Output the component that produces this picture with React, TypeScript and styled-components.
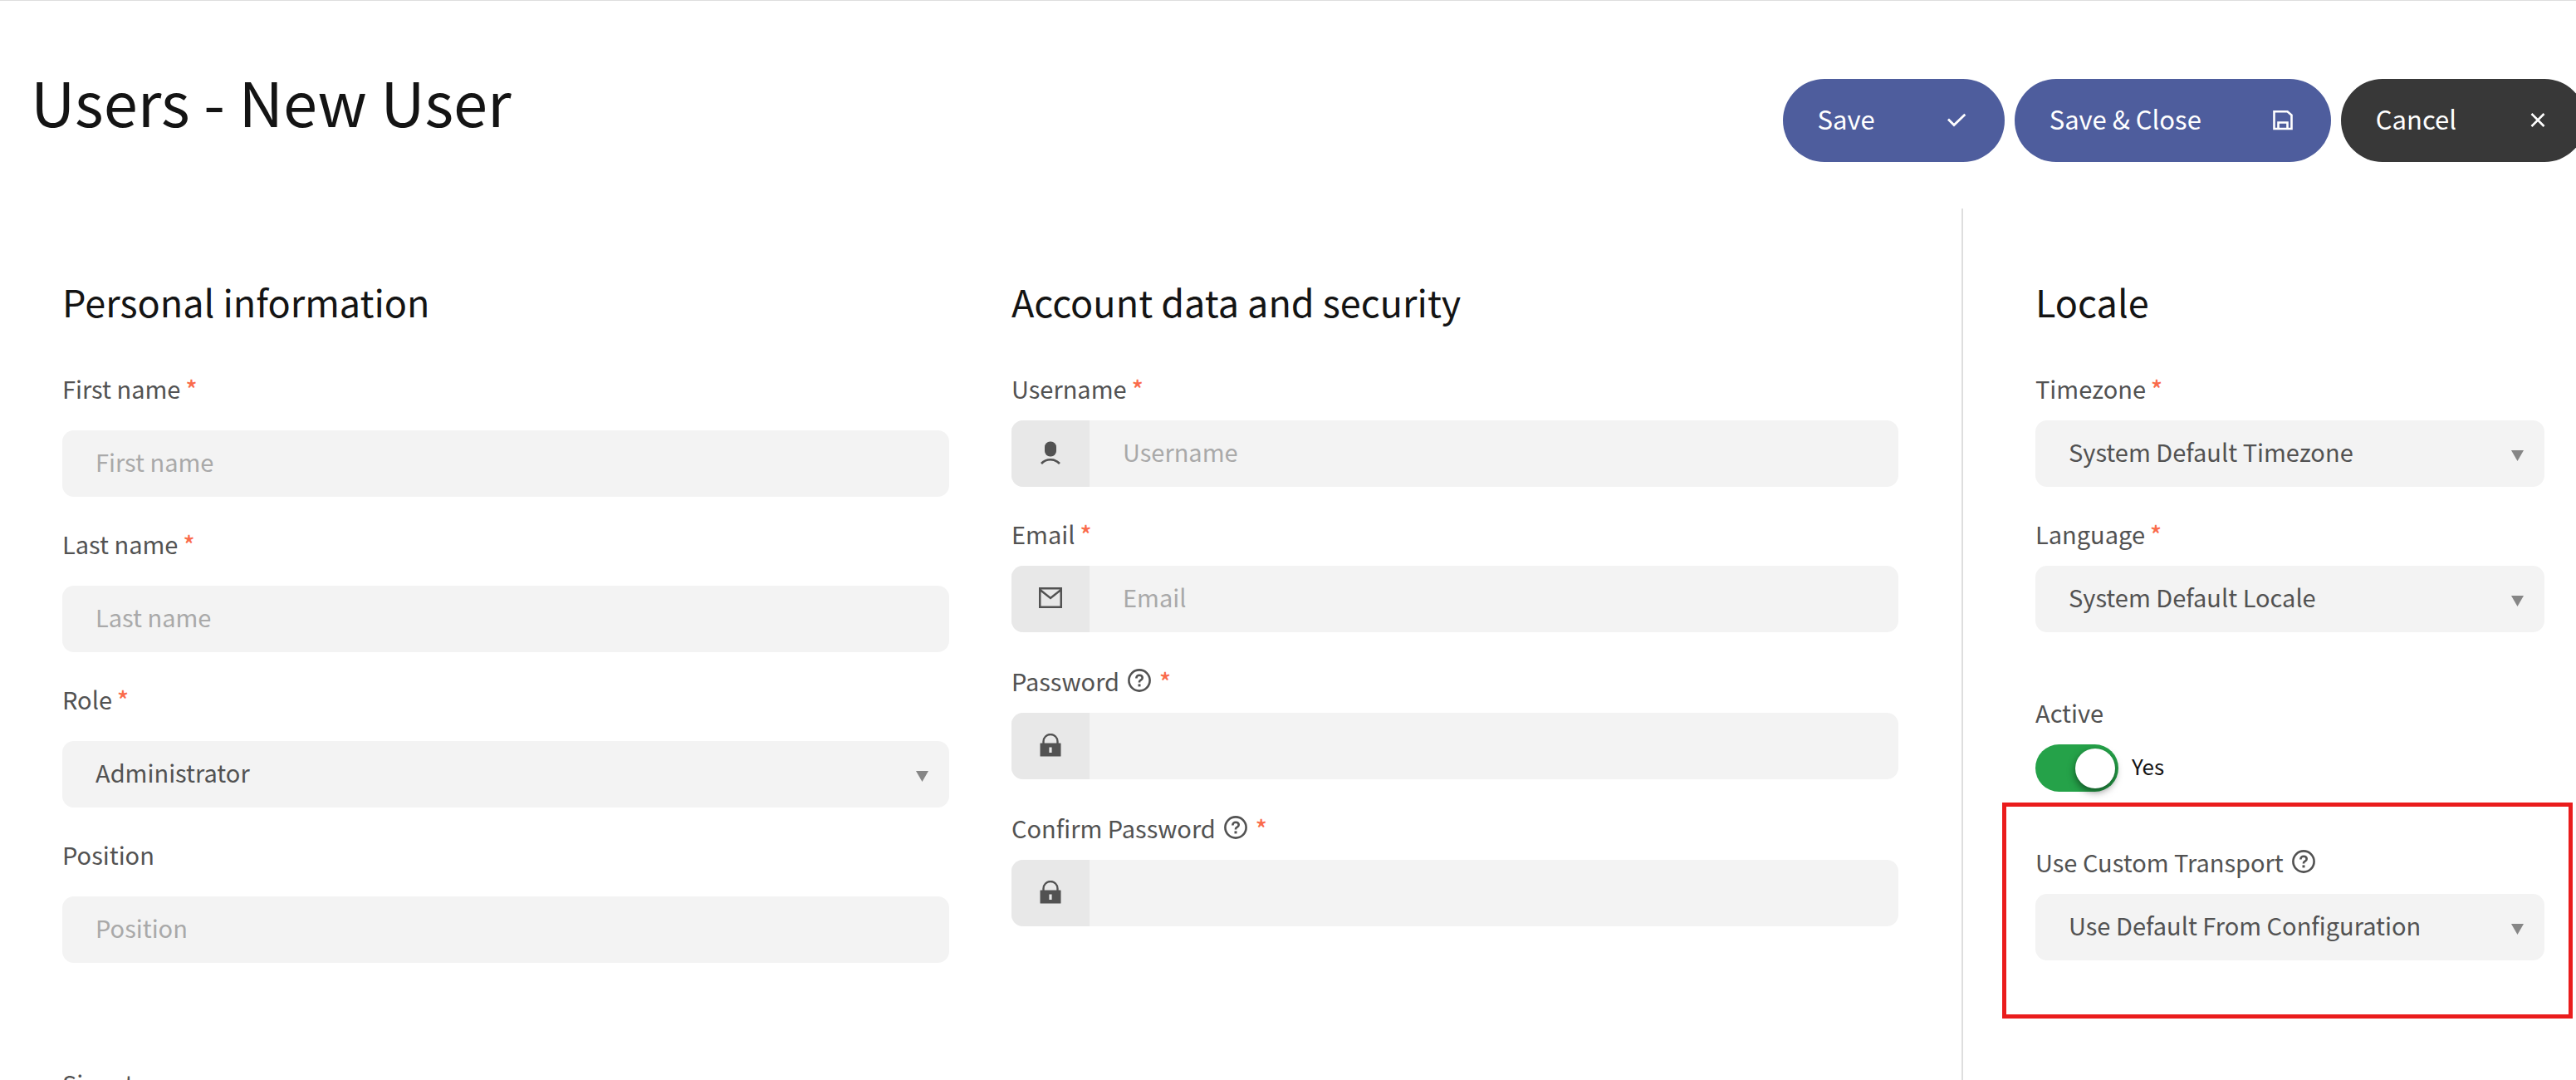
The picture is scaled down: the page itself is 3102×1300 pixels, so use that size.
import React from 'react';
import styled, { createGlobalStyle } from 'styled-components';

const fontStack = '"Source Sans Pro", "Noto Sans CJK SC", sans-serif';

const Global = createGlobalStyle`
  *, *::before, *::after { box-sizing: border-box; }
  body {
    margin: 0;
    background: #fff;
    color: #141414;
    font-family: ${fontStack};
    font-size: 29px;
    line-height: 40px;
  }
`;

const Page = styled.main`
  height: 100vh;
  overflow: hidden auto;
  scrollbar-width: none;
  border-top: 1px solid #dedede;
`;

const Header = styled.header`
  display: flex;
  justify-content: space-between;
  align-items: flex-start;
  padding: 66px 0 0 37px;
`;

const Title = styled.h1`
  margin: 0;
  font-size: 74px;
  line-height: 108px;
  font-weight: 400;
`;

const Actions = styled.div`
  display: flex;
  gap: 12px;
  margin: 28px -12px 0 0;
`;

const Action = styled.button<{ $dark?: boolean }>`
  display: flex;
  align-items: center;
  gap: 82px;
  height: 100px;
  padding: 0 42px;
  border: 0;
  border-radius: 50px;
  background: ${p => (p.$dark ? '#383838' : '#4e5d9d')};
  color: #fff;
  font: 400 31px/40px ${fontStack};
  white-space: nowrap;
  svg { display: block; flex: none; }
`;

const Caption = styled.span`
  padding-bottom: 5px;
`;

const Columns = styled.div`
  display: grid;
  grid-template-columns: minmax(0, 1fr) 740px;
  margin-top: 56px;
`;

const MainArea = styled.div`
  display: grid;
  grid-template-columns: repeat(2, minmax(0, 1fr));
  gap: 75px;
  padding: 84px 76px 0 75px;
  align-content: start;
`;

const Aside = styled.aside`
  border-left: 2px solid #dedede;
  padding: 84px 38px 0 87px;
`;

const Section = styled.section`
  display: flex;
  flex-direction: column;
`;

const SectionTitle = styled.h2`
  margin: 0 0 56px;
  font-size: 45px;
  line-height: 56px;
  font-weight: 400;
`;

const Field = styled.div<{ $roomy?: boolean; $after?: number }>`
  display: flex;
  flex-direction: column;
  gap: ${p => (p.$roomy ? 31 : 19)}px;
  margin-bottom: ${p => p.$after ?? 36}px;
`;

const Label = styled.label<{ $help?: boolean }>`
  display: flex;
  align-items: center;
  gap: 6px;
  padding-top: ${p => (p.$help ? 2 : 0)}px;
  color: #525252;
  svg { display: block; margin: 0 4px; }
`;

const Star = styled.span`
  color: #fa6b4b;
  font-weight: 500;
`;

const Control = styled.div<{ $tall?: boolean }>`
  display: flex;
  height: ${p => (p.$tall ? 240 : 80)}px;
  border-radius: 14px;
  background: #f3f3f3;
  overflow: hidden;
  position: relative;
`;

const Addon = styled.span`
  display: flex;
  align-items: center;
  justify-content: center;
  width: 94px;
  padding-bottom: 3px;
  background: #e8e8e8;
  color: #525252;
`;

const Input = styled.input`
  flex: 1;
  min-width: 0;
  border: 0;
  outline: 0;
  background: transparent;
  padding: 0 40px 6px;
  font: inherit;
  color: #525252;
  &::placeholder { color: #a9a9a9; opacity: 1; }
`;

const Area = styled.textarea`
  flex: 1;
  min-width: 0;
  border: 0;
  outline: 0;
  resize: none;
  background: transparent;
  padding: 20px 40px;
  font: inherit;
  color: #525252;
`;

const Select = styled.select`
  flex: 1;
  min-width: 0;
  appearance: none;
  border: 0;
  outline: 0;
  background: transparent;
  padding: 0 72px 6px 40px;
  font: inherit;
  color: #525252;
`;

const Caret = styled.svg`
  position: absolute;
  right: 25px;
  top: 36px;
  pointer-events: none;
`;

const Switch = styled.label`
  display: flex;
  align-items: center;
  gap: 16px;
  width: max-content;
  font-size: 26px;
  color: #141414;
`;

const Toggle = styled.input`
  appearance: none;
  display: flex;
  align-items: center;
  width: 100px;
  height: 57px;
  margin: 0;
  padding: 0 4px;
  border-radius: 29px;
  background: #a9a9a9;
  &:checked {
    justify-content: flex-end;
    background: #25a249;
  }
  &::before {
    content: "";
    width: 48px;
    height: 48px;
    border-radius: 50%;
    background: #fff;
    box-shadow: 0 4px 10px rgba(0, 0, 0, 0.5);
  }
`;

const Highlight = styled.div`
  margin: 13px -34px 0 -40px;
  padding: 44px 29px 65px 35px;
  border: 5px solid #ea1c1c;
`;

const HelpIcon = () => (
  <svg width="28" height="28" viewBox="0 0 28 28" fill="none" stroke="currentColor">
    <circle cx="14" cy="14" r="12.6" strokeWidth="2.6" />
    <path d="M10.4 11.4V11c0-1.9 1.5-3.2 3.6-3.2s3.7 1.2 3.7 3.2c0 2.8-3.7 2.3-3.7 4.8v.8" strokeWidth="2.6" />
    <path d="M14 18.4v3" strokeWidth="3" />
  </svg>
);

const UserIcon = () => (
  <svg width="24" height="28" viewBox="0 0 24 28">
    <rect x="5" y="0.5" width="14" height="18" rx="6.5" fill="currentColor" />
    <path d="M1 27Q5.500 22.300 12 22.300T23 27" fill="none" stroke="currentColor" strokeWidth="2.6" />
  </svg>
);

const MailIcon = () => (
  <svg width="28" height="25" viewBox="0 0 28 25" fill="none" stroke="currentColor" strokeWidth="2.5">
    <path d="M1.250 1.250h25.500v22.500H1.250zM1.500 3L14 13 26.500 3" />
  </svg>
);

const LockIcon = () => (
  <svg width="26" height="28" viewBox="0 0 26 28">
    <path d="M4.500 12v-2.500a8.500 8.500 0 0 1 17 0V12" fill="none" stroke="currentColor" strokeWidth="2.4" />
    <path fillRule="evenodd" d="M1 11.500h24q.5 0 .5.500v15q0 .5-.5.500H1q-.5 0-.5-.500V12q0-.5.5-.500zM11.400 16.500V23h3.200v-6.500z" fill="currentColor" />
  </svg>
);

const CheckIcon = () => (
  <svg width="32" height="32" viewBox="0 0 32 32" fill="none" stroke="currentColor" strokeWidth="2.8">
    <path d="M6 14.500L13 21.500 26.300 8.700" />
  </svg>
);

const SaveIcon = () => (
  <svg width="32" height="32" viewBox="0 0 32 32" fill="none" stroke="currentColor" strokeWidth="2.6">
    <path d="M5.500 5.300H21.500L26.500 9.500V26H5.500zM10.500 25.500V18.500h11V25.500" />
  </svg>
);

const CloseIcon = () => (
  <svg width="32" height="32" viewBox="0 0 32 32" fill="none" stroke="currentColor" strokeWidth="2.6">
    <path d="M8.500 8l15 15M23.500 8l-15 15" />
  </svg>
);

type FieldProps = {
  id: string;
  label: string;
  required?: boolean;
  help?: boolean;
  roomy?: boolean;
  after?: number;
};

const Row = ({ id, label, required, help, roomy, after, children }: FieldProps & { children?: React.ReactNode }) => (
  <Field $roomy={roomy} $after={after}>
    <Label htmlFor={id} $help={help}>
      {label}
      {help && <HelpIcon />}
      {required && <Star>*</Star>}
    </Label>
    {children}
  </Field>
);

const TextField = ({ icon, placeholder, type = 'text', ...rest }: FieldProps & { icon?: React.ReactNode; placeholder?: string; type?: string }) => (
  <Row {...rest}>
    <Control>
      {icon && <Addon>{icon}</Addon>}
      <Input id={rest.id} type={type} placeholder={placeholder} />
    </Control>
  </Row>
);

const SelectField = ({ value, ...rest }: FieldProps & { value: string }) => (
  <Row {...rest}>
    <Control>
      <Select id={rest.id} defaultValue={value}>
        <option>{value}</option>
      </Select>
      <Caret width="15" height="13" viewBox="0 0 15 13"><path d="M0 0h15L7.500 13z" fill="#868686" /></Caret>
    </Control>
  </Row>
);

export default function App() {
  return (
    <>
      <Global />
      <Page>
        <Header>
          <Title>Users - New User</Title>
          <Actions>
            <Action type="button"><Caption>Save</Caption><CheckIcon /></Action>
            <Action type="button"><Caption>Save &amp; Close</Caption><SaveIcon /></Action>
            <Action type="button" $dark><Caption>Cancel</Caption><CloseIcon /></Action>
          </Actions>
        </Header>
        <Columns>
          <MainArea>
            <Section>
              <SectionTitle>Personal information</SectionTitle>
              <TextField roomy id="first" label="First name" placeholder="First name" required />
              <TextField roomy id="last" label="Last name" placeholder="Last name" required />
              <SelectField roomy id="role" label="Role" value="Administrator" required />
              <TextField roomy id="position" label="Position" placeholder="Position" after={124} />
              <Row roomy id="signature" label="Signature">
                <Control $tall><Area id="signature" /></Control>
              </Row>
            </Section>
            <Section>
              <SectionTitle>Account data and security</SectionTitle>
              <TextField id="username" label="Username" placeholder="Username" icon={<UserIcon />} required />
              <TextField id="email" label="Email" placeholder="Email" icon={<MailIcon />} required />
              <TextField id="password" label="Password" type="password" icon={<LockIcon />} help required />
              <TextField id="confirm" label="Confirm Password" type="password" icon={<LockIcon />} help required />
            </Section>
          </MainArea>
          <Aside>
            <Section>
              <SectionTitle>Locale</SectionTitle>
              <SelectField id="timezone" label="Timezone" value="System Default Timezone" required />
              <SelectField id="language" label="Language" value="System Default Locale" required after={76} />
              <Row id="active" label="Active" after={0}>
                <Switch>
                  <Toggle id="active" type="checkbox" defaultChecked />
                  <Caption>Yes</Caption>
                </Switch>
              </Row>
              <Highlight>
                <SelectField id="transport" label="Use Custom Transport" value="Use Default From Configuration" help after={0} />
              </Highlight>
            </Section>
          </Aside>
        </Columns>
      </Page>
    </>
  );
}
